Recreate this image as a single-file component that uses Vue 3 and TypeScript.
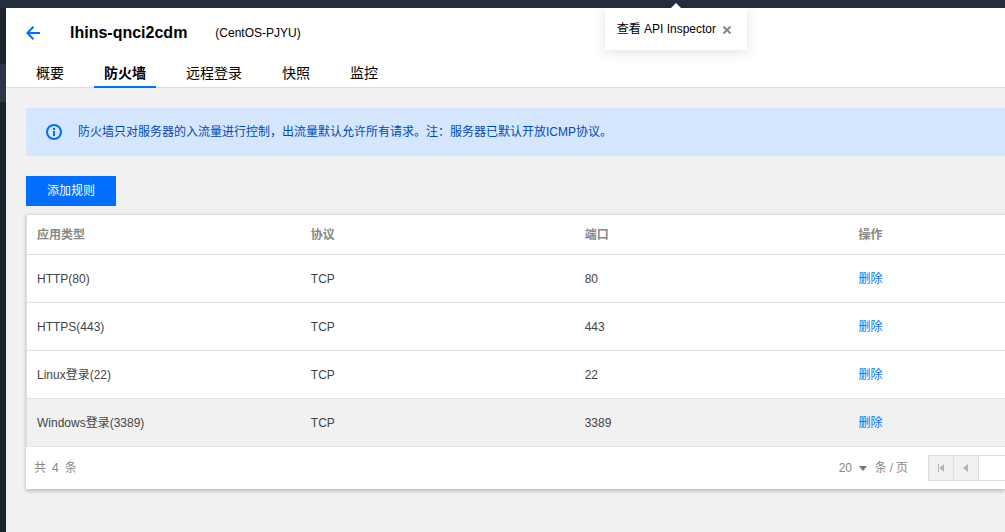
<script setup lang="ts">
import { ref } from 'vue'

interface Rule {
  app: string
  protocol: string
  port: string
}

const tabs: string[] = ['概要', '防火墙', '远程登录', '快照', '监控']
const activeTab = ref<string>('防火墙')
const showTip = ref<boolean>(true)
const pageSize = ref<number>(20)
const page = ref<string>('')

const rules = ref<Rule[]>([
  { app: 'HTTP(80)', protocol: 'TCP', port: '80' },
  { app: 'HTTPS(443)', protocol: 'TCP', port: '443' },
  { app: 'Linux登录(22)', protocol: 'TCP', port: '22' },
  { app: 'Windows登录(3389)', protocol: 'TCP', port: '3389' },
])
const highlighted = ref<string>('Windows登录(3389)')

function removeRule(rule: Rule): void {
  rules.value = rules.value.filter((r) => r !== rule)
}
</script>

<template>
  <div class="console">
    <div class="topbar"></div>
    <div class="body">
      <aside class="rail"><div class="rail-item"></div></aside>
      <main class="main">
        <header class="head">
          <div class="title-row">
            <button class="back" type="button" aria-label="返回">
              <svg width="14" height="14" viewBox="0 0 14 14" fill="none" stroke="#006eff" stroke-width="2">
                <path d="M7.5 0.8 1.4 7l6.1 6.2M1.6 7H14" />
              </svg>
            </button>
            <h1 class="name">lhins-qnci2cdm</h1>
            <span class="alias">(CentOS-PJYU)</span>
          </div>
          <nav class="tabs">
            <a
              v-for="tab in tabs"
              :key="tab"
              href="#"
              class="tab"
              :class="{ active: tab === activeTab }"
              @click.prevent="activeTab = tab"
            >{{ tab }}</a>
          </nav>
        </header>

        <section class="content">
          <div class="notice">
            <svg class="notice-icon" width="16" height="16" viewBox="0 0 16 16">
              <circle cx="8" cy="8" r="7" fill="none" stroke="#006eff" stroke-width="2" />
              <rect x="7" y="4" width="2" height="2" fill="#006eff" />
              <rect x="7" y="7" width="2" height="5" fill="#006eff" />
            </svg>
            <p class="notice-text">防火墙只对服务器的入流量进行控制，出流量默认允许所有请求。注：服务器已默认开放ICMP协议。</p>
          </div>

          <button class="add" type="button">添加规则</button>

          <div class="panel">
            <table class="rules">
              <thead>
                <tr>
                  <th>应用类型</th>
                  <th>协议</th>
                  <th>端口</th>
                  <th>操作</th>
                </tr>
              </thead>
              <tbody>
                <tr v-for="rule in rules" :key="rule.app" :class="{ hover: rule.app === highlighted }">
                  <td>{{ rule.app }}</td>
                  <td>{{ rule.protocol }}</td>
                  <td>{{ rule.port }}</td>
                  <td><a href="#" class="link" @click.prevent="removeRule(rule)">删除</a></td>
                </tr>
              </tbody>
            </table>

            <footer class="foot">
              <div class="total"><span>共</span><span>{{ rules.length }}</span><span>条</span></div>
              <div class="paging">
                <label class="size">
                  <span class="size-box">
                    <select v-model="pageSize" class="size-select">
                      <option :value="10">10</option>
                      <option :value="20">20</option>
                      <option :value="50">50</option>
                    </select>
                    <svg width="8" height="5" viewBox="0 0 8 5"><path d="M0 0h8L4 5z" fill="#777" /></svg>
                  </span>
                  <span class="unit"><span>条</span><span>/</span><span>页</span></span>
                </label>
                <div class="pager">
                  <button class="page-btn" type="button" aria-label="第一页">
                    <svg width="7" height="8" viewBox="0 0 7 8" fill="#b4b4b4"><path d="M0 0h1v8H0zM6 0v8L1.5 4z" /></svg>
                  </button>
                  <button class="page-btn" type="button" aria-label="上一页">
                    <svg width="6" height="8" viewBox="0 0 6 8" fill="#b4b4b4"><path d="M5 0v8L0 4z" /></svg>
                  </button>
                  <input v-model="page" class="page-input" type="text" aria-label="页码" />
                </div>
              </div>
            </footer>
          </div>
        </section>
      </main>
    </div>

    <div v-if="showTip" class="tip">
      <span>查看 API Inspector</span>
      <button class="tip-close" type="button" aria-label="关闭" @click="showTip = false">
        <svg width="8" height="8" viewBox="0 0 8 8" stroke="#888" stroke-width="2"><path d="M0.5 0.5l7 7M7.5 0.5l-7 7" /></svg>
      </button>
    </div>
  </div>
</template>

<style>
body {
  margin: 0;
}
</style>

<style scoped>
.console {
  position: relative;
  display: flex;
  flex-direction: column;
  min-height: 100vh;
  overflow: hidden;
  font-family: "Liberation Sans", "Noto Sans CJK SC", sans-serif;
  font-size: 12px;
  line-height: 18px;
  color: #000;
  background: #f1f1f1;
}
.console * {
  box-sizing: border-box;
}
button,
input,
select {
  margin: 0;
  padding: 0;
  border: 0;
  border-radius: 0;
  font: inherit;
  color: inherit;
  background: none;
}
button {
  cursor: pointer;
}
a {
  text-decoration: none;
}
.topbar {
  height: 8px;
  background: #262f3e;
}
.body {
  display: flex;
  flex: 1;
}
.rail {
  flex: none;
  width: 6px;
  padding-top: 56px;
  background: #1e222d;
}
.rail-item {
  height: 38px;
  background: #2d3549;
}
.main {
  flex: 1;
  min-width: 0;
}
.head {
  height: 80px;
  background: #fff;
  border-bottom: 1px solid #ddd;
}
.title-row {
  display: flex;
  align-items: center;
  height: 50px;
  padding-left: 20px;
}
.back {
  display: flex;
  margin-right: 30px;
}
.name {
  margin: 0 28px 0 0;
  font-size: 16px;
  line-height: 24px;
  font-weight: 700;
}
.tabs {
  display: flex;
  gap: 20px;
  padding-left: 20px;
}
.tab {
  height: 30px;
  padding: 0 10px;
  font-size: 14px;
  line-height: 30px;
  color: #000;
  white-space: nowrap;
}
.tab.active {
  font-weight: 700;
  border-bottom: 2px solid #006eff;
}
.content {
  padding: 20px 0 20px 20px;
}
.notice {
  display: flex;
  align-items: center;
  gap: 16px;
  min-height: 48px;
  padding: 0 20px;
  background: #d5e7ff;
}
.notice-icon {
  flex: none;
}
.notice-text {
  margin: 0;
  color: #0048b8;
}
.add {
  display: block;
  height: 30px;
  margin: 20px 0 8px;
  padding: 0 21px;
  background: #006eff;
  color: #fff;
}
.panel {
  background: #fff;
  border-top: 1px solid #ddd;
  box-shadow: 0 2px 4px rgba(0, 0, 0, 0.24);
}
.rules {
  width: 100%;
  table-layout: fixed;
  border-collapse: separate;
  border-spacing: 0;
  border-left: 1px solid #ddd;
}
.rules th,
.rules td {
  height: 48px;
  padding: 0 10px;
  border-bottom: 1px solid #e2e2e2;
  text-align: left;
  color: #444;
}
.rules th {
  width: 28%;
  height: 40px;
  border-bottom-color: #ddd;
  font-weight: 700;
  color: #888;
}
.rules th:last-child {
  width: auto;
}
.rules .hover td {
  background: #f1f1f1;
}
.rules .link {
  color: #006eff;
}
.foot {
  display: flex;
  align-items: center;
  justify-content: space-between;
  height: 42px;
  padding-left: 8px;
  color: #888;
}
.total {
  display: flex;
  gap: 6px;
}
.paging,
.size,
.size-box,
.unit {
  display: flex;
  align-items: center;
}
.paging {
  gap: 20px;
}
.size {
  gap: 8px;
}
.size-box {
  gap: 6px;
}
.size-select {
  width: 14px;
  appearance: none;
}
.unit {
  gap: 3px;
}
.pager {
  display: flex;
  width: 77px;
  height: 26px;
  border: 1px solid #ddd;
  border-right: 0;
}
.page-btn {
  display: flex;
  flex: none;
  align-items: center;
  justify-content: center;
  width: 25px;
  border-right: 1px solid #ddd;
  background: #f1f1f1;
}
.page-input {
  flex: 1;
  min-width: 0;
  background: #fff;
}
.tip {
  position: absolute;
  top: 8px;
  right: 258px;
  display: flex;
  align-items: center;
  gap: 7px;
  height: 42px;
  padding: 0 16px 0 12px;
  background: #fff;
  box-shadow: 0 2px 12px rgba(0, 0, 0, 0.12);
}
.tip::before {
  content: "";
  position: absolute;
  top: -5px;
  left: 66px;
  border: 5px solid transparent;
  border-top: 0;
  border-bottom-color: #fff;
}
.tip-close {
  display: flex;
  padding-top: 2px;
}
</style>
